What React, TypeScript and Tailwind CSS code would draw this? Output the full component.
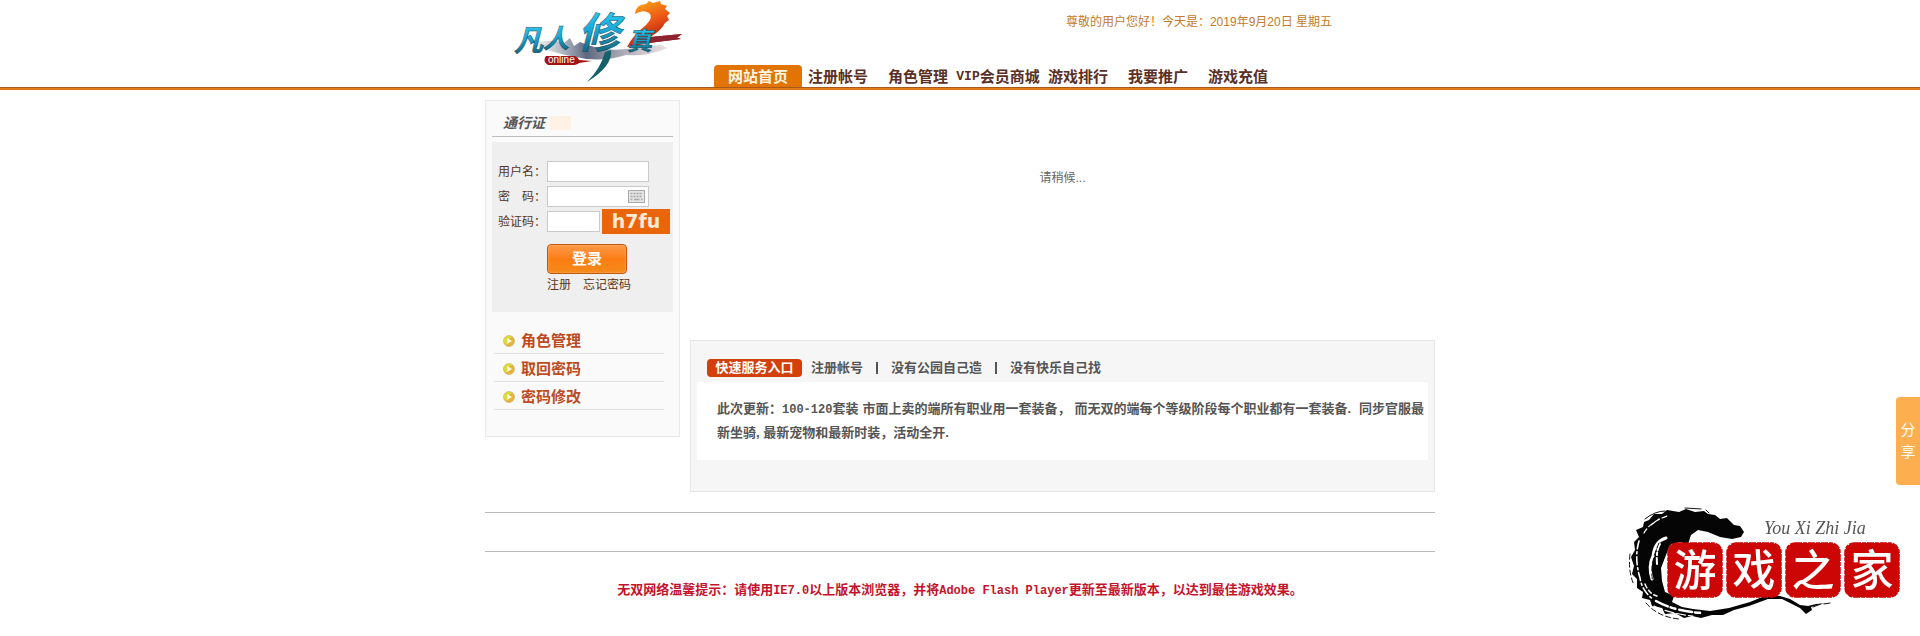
import { useState } from "react";

const navItems = [
  { label: "注册帐号" },
  { label: "角色管理" },
  { label: "会员商城", prefix: "VIP" },
  { label: "游戏排行" },
  { label: "我要推广" },
  { label: "游戏充值" },
];

const sideLinks = ["角色管理", "取回密码", "密码修改"];

const quickLinks = ["注册帐号", "没有公园自己造", "没有快乐自己找"];

const sealChars = ["游", "戏", "之", "家"];

const fieldClass =
  "h-[21px] border border-[#c9c9c9] bg-white px-1 text-xs text-[#333] outline-none";

function Logo() {
  return (
    <svg viewBox="5 0 229 87" className="h-[87px] w-[229px] shrink-0" role="img" aria-label="凡人修真2 online">
      <defs>
        <linearGradient id="ice" x1="0" y1="0" x2="0" y2="1">
          <stop offset="0" stopColor="#35dcfa" />
          <stop offset="0.5" stopColor="#1ba9d8" />
          <stop offset="1" stopColor="#0e4f5c" />
        </linearGradient>
        <linearGradient id="fire" x1="0" y1="0" x2="0.5" y2="1">
          <stop offset="0" stopColor="#f9b413" />
          <stop offset="0.5" stopColor="#ee5a16" />
          <stop offset="1" stopColor="#a51414" />
        </linearGradient>
        <linearGradient id="smoke" x1="0" y1="0" x2="1" y2="0">
          <stop offset="0" stopColor="#b9bec8" stopOpacity="0.2" />
          <stop offset="0.4" stopColor="#5d6780" />
          <stop offset="1" stopColor="#c9b4b8" stopOpacity="0.4" />
        </linearGradient>
      </defs>
      <path d="M52 44 Q70 38 84 43 L90 38 L94 46 L100 42 Q122 52 146 49 L180 45 L188 48 Q166 57 146 55 Q120 63 96 57 Q72 53 52 44Z" fill="url(#smoke)" />
      <path d="M155 14 Q156 4 166 4 L169 1 L173 3 L180 1 L181 4 L187 6 L185 9 L190 13 L187 16 L189 20 L185 23 Q181 31 170 37 L202 34 L197 38 L201 39 L176 42 Q160 45 147 47 Q153 35 166 25 Q174 17 169 13 Q163 9 155 14Z" fill="url(#fire)" />
      <path d="M170 37 L202 34 L196 37 L201 39 L177 42 L160 44Z" fill="#8e2430" />
      {/* long tail under the third character */}
      <path d="M131 50 Q133 66 107 82 Q121 68 125 52Z" fill="#16606a" />
      <g fontFamily="'Noto Sans CJK SC', sans-serif" fontStyle="italic" fontWeight="700" fill="url(#ice)" stroke="#174b5b" strokeWidth="0.5">
        <text x="34" y="51" fontSize="29">凡</text>
        <text x="63" y="48" fontSize="26">人</text>
        <text x="98" y="48" fontSize="42">修</text>
        <text x="147" y="50" fontSize="25">真</text>
      </g>
      <path d="M66 56 L95 56 Q98 57 99 60 L112 61 L99 63 Q97 65 92 65 L68 65 Q62 61 66 56Z" fill="#a01414" />
      <text x="68" y="63" fontFamily="'Liberation Sans', sans-serif" fontSize="10" fill="#fff">online</text>
    </svg>
  );
}

function Bullet() {
  return (
    <svg viewBox="0 0 12 12" className="size-3 shrink-0" aria-hidden="true">
      <circle cx="6" cy="6" r="5.500" fill="#e6b43c" stroke="#cfb070" strokeWidth="0.600" />
      <path d="M1 7 A5 5 0 0 1 9 2 Q4 3 4 10 Q1.500 9 1 7Z" fill="#d9dc3e" />
      <path d="M4.300 3 L9 6 L4.300 9Z" fill="#fffbe0" />
    </svg>
  );
}

function KeyboardIcon() {
  return (
    <svg viewBox="0 0 17 13" className="h-[13px] w-[17px]" aria-hidden="true">
      <rect x="0.500" y="0.500" width="16" height="12" fill="#e4e4e4" stroke="#aaa" />
      <path d="M2.500 3.500H14.500M2.500 6.500H14.500" stroke="#a8a8a8" strokeWidth="1.500" strokeDasharray="2 1" />
      <path d="M2.500 9.500H4.500M6 9.500H11.500M13 9.500H14.500" stroke="#a8a8a8" strokeWidth="1.500" />
    </svg>
  );
}

function LoginForm() {
  const [user, setUser] = useState("");
  const [password, setPassword] = useState("");
  const [code, setCode] = useState("");

  return (
    <form
      className="mt-[5px] h-[170px] bg-[#efefef] pt-[17px] pl-[6px] text-xs text-[#5a3420]"
      onSubmit={(e) => e.preventDefault()}
    >
      <div className="flex h-[25px] items-center">
        <label htmlFor="user" className="w-[49px] whitespace-nowrap">用户名&#65306;</label>
        <input id="user" className={`w-[102px] ${fieldClass}`} value={user} onChange={(e) => setUser(e.target.value)} />
      </div>
      <div className="flex h-[25px] items-center">
        <label htmlFor="password" className="w-[49px] whitespace-nowrap">密&#12288;码&#65306;</label>
        <div className="relative flex">
          <input
            id="password"
            type="password"
            className={`w-[102px] ${fieldClass}`}
            value={password}
            onChange={(e) => setPassword(e.target.value)}
          />
          <span className="absolute top-1 right-1">
            <KeyboardIcon />
          </span>
        </div>
      </div>
      <div className="flex h-[25px] items-center">
        <label htmlFor="code" className="w-[49px] whitespace-nowrap">验证码&#65306;</label>
        <input id="code" className={`w-[53px] ${fieldClass}`} value={code} onChange={(e) => setCode(e.target.value)} />
        <span className="ml-[2px] h-[25px] w-[68px] bg-[#ea640a] text-center font-['DejaVu_Sans',sans-serif] text-[19px] leading-[25px] font-bold text-[#ffe8d4]">
          h7fu
        </span>
      </div>
      <button
        type="submit"
        className="mt-[10px] ml-[49px] block h-[30px] w-20 rounded-[4px] border border-[#c4560c] bg-linear-to-b from-[#ff9a45] via-[#fb7d12] to-[#f58a1c] text-[15px] leading-[28px] font-bold text-white shadow-[inset_0_0_2px_#ffc890]"
      >
        登录
      </button>
      <div className="ml-[49px] flex gap-3 leading-[22px]">
        <a href="#register">注册</a>
        <a href="#forgot">忘记密码</a>
      </div>
    </form>
  );
}

function Sidebar() {
  return (
    <aside className="h-[337px] w-[195px] shrink-0 border border-[#e9e9e9] bg-[#fafafa] px-[6px]">
      <h2 className="flex h-9 items-center border-b border-[#bdbdbd] pt-2 pl-[11px] text-sm font-bold text-[#555] italic">
        通行证
        <span className="ml-1 h-[14px] w-[22px] bg-[#fff1e4]" />
      </h2>
      <LoginForm />
      <ul className="mt-[14px] ml-[2px] w-[170px]">
        {sideLinks.map((label) => (
          <li key={label} className="h-7 border-b border-[#e2e2e2]">
            <a href="#account" className="flex h-full items-center gap-[6px] pt-[3px] pl-[9px] text-[15px] leading-5 font-bold text-[#bd4a20]">
              <Bullet />
              {label}
            </a>
          </li>
        ))}
      </ul>
    </aside>
  );
}

function QuickService() {
  return (
    <section className="mt-auto h-[152px] border border-[#e6e6e6] bg-[#f6f6f6] px-[6px]">
      <div className="flex h-[41px] items-center pt-3 pl-[10px] text-[13px] font-bold text-[#555]">
        <h2 className="mr-[9px] flex h-[18px] w-[95px] items-center justify-center rounded-[4px] bg-[#d4400a] text-white">
          快速服务入口
        </h2>
        {quickLinks.map((label, i) => (
          <span key={label} className="flex items-center">
            {i > 0 && <span className="mx-[13px] h-3 w-[2px] bg-[#555]" />}
            <a href="#quick">{label}</a>
          </span>
        ))}
      </div>
      <div className="h-[78px] overflow-hidden bg-white pt-[15px] pl-5 text-[13px] leading-6 font-bold whitespace-nowrap text-[#555]">
        <p>
          此次更新&#65306;<span className="font-['Liberation_Mono',monospace] text-xs">100-120</span>套装
          <span className="ml-1">市面上卖的端所有职业用一套装备&#65292;</span>
          <span className="ml-1">而无双的端每个等级阶段每个职业都有一套装备.</span>
          <span className="ml-2">同步官服最</span>
        </p>
        <p>新坐骑, 最新宠物和最新时装&#65292;活动全开.</p>
      </div>
    </section>
  );
}

function SealLogo() {
  return (
    <svg viewBox="16 24 278 120" className="fixed right-[16px] bottom-[12px] h-[120px] w-[278px]" role="img" aria-label="游戏之家">
      <path
        d="M134 52 L130 46 L124 45 L117 38 L110 39 L105 35 L98 34 L94 31 L85 32 L76 29 L69 32 L57 30 L52 34 L44 34 L39 40 L34 42 L33 47 L26 50 L29 57 L24 62 L25 70 L21 77 L24 86 L22 94 L27 99 L27 108 L33 112 L32 118 L40 120 L42 126 L52 128 L55 134 L65 133 L74 138 L82 136 L91 138 L102 135 L113 135 L124 130 L139 126 L158 119 L172 119 L184 125 L190 128 L196 134 L202 130 L201 127 L211 124 L218 123 L206 124 L198 126 L190 125 L180 119 L170 116 L157 115 L140 122 L119 128 L100 131 L83 129 L72 127 L62 122 L64 116 L55 112 L52 101 L51 88 L56 75 L60 65 L70 62 L78 64 L81 55 L88 50 L98 52 L110 57 L122 59 L131 57Z"
        fill="#050505"
      />
      <g fill="none" stroke="#fff" strokeLinecap="round">
        <path d="M56 58 Q45 61 43 76 Q38 86 42 99" strokeWidth="3" />
        <path d="M50 64 Q46 70 47 84" strokeWidth="2" strokeDasharray="7 2 3 3" />
        <path d="M29 61 Q24 78 30 98 Q32 111 43 119" strokeWidth="1.600" strokeDasharray="8 3 2 3" />
        <path d="M34 53 Q40 42 57 36 M41 45 L49 39" strokeWidth="1.200" strokeDasharray="5 3" />
        <path d="M46 121 Q66 132 94 133" strokeWidth="2.500" strokeDasharray="13 3 5 4" />
        <path d="M44 126 Q61 134 83 136" strokeWidth="1.200" strokeDasharray="9 3" />
        <path d="M35 104 Q39 114 47 116" strokeWidth="1.500" strokeDasharray="4 3" />
      </g>
      <g fill="none" stroke="#111" strokeWidth="1" strokeLinecap="round">
        <path d="M35 39 Q45 31 55 31 M75 28 L91 29 M96 30 L99 33" />
        <path d="M20 74 Q18 92 24 105 M36 123 Q48 137 69 139 M49 63 Q39 85 43 103" strokeDasharray="5 3" />
        <path d="M203 127 L211 124 M214 124 L220 123" />
      </g>
      {sealChars.map((ch, i) => (
        <g key={ch}>
          <rect
            x={58 + i * 59}
            y="63"
            width="54"
            height="54"
            rx="9"
            fill="#cc0505"
            stroke="#cc0505"
            strokeWidth="1.500"
            strokeDasharray="7 1 4 1"
          />
          <text
            x={85 + i * 59}
            y="106"
            textAnchor="middle"
            fontFamily="'Noto Sans CJK SC', sans-serif"
            fontSize="43"
            fontWeight="500"
            fill="#fff"
          >
            {ch}
          </text>
        </g>
      ))}
      <text
        x="154"
        y="54"
        fontFamily="'Liberation Serif', serif"
        fontStyle="italic"
        fontSize="18"
        fill="#555"
      >
        You Xi Zhi Jia
      </text>
    </svg>
  );
}

export default function App() {
  return (
    <div className="font-['Liberation_Sans','Noto_Sans_CJK_SC',sans-serif]">
      <header className="border-b-2 border-[#e27a14]">
        <div className="border-b border-[#a85a1c]">
          <div className="mx-auto flex h-[87px] max-w-[950px]">
            <Logo />
            <div className="flex grow flex-col justify-between">
              <p className="mt-3 mr-[103px] text-right text-xs leading-5 text-[#c47a28]">
                尊敬的用户您好&#65281;今天是&#65306;2019年9月20日 星期五
              </p>
              <nav className="flex h-[22px] text-[15px] leading-6 font-bold text-[#5a3026]">
                <a href="#home" className="-mr-1 w-[88px] rounded-t-[4px] bg-[#e27404] text-center text-[#fff4e0]">
                  网站首页
                </a>
                {navItems.map((item) => (
                  <a key={item.label} href="#nav" className="flex w-20 justify-center whitespace-nowrap">
                    {item.prefix && (
                      <span className="font-['Liberation_Mono',monospace] text-[13px]">{item.prefix}</span>
                    )}
                    {item.label}
                  </a>
                ))}
              </nav>
            </div>
          </div>
        </div>
      </header>

      <main className="mx-auto max-w-[950px]">
        <div className="flex gap-[10px] pt-[10px]">
          <Sidebar />
          <div className="flex h-[392px] min-w-0 grow flex-col">
            <p className="mt-[68px] text-center text-xs leading-5 text-[#666]">请稍候...</p>
            <QuickService />
          </div>
        </div>
        <hr className="mt-5 border-[#bbb]" />
        <hr className="mt-[38px] border-[#bbb]" />
      </main>

      <footer className="mt-7 text-center text-[13px] leading-5 font-bold text-[#c4142c]">
        无双网络温馨提示&#65306;请使用
        <span className="font-['Liberation_Mono',monospace] text-xs">IE7.0</span>
        以上版本浏览器&#65292;并将
        <span className="font-['Liberation_Mono',monospace] text-xs">Adobe Flash Player</span>
        更新至最新版本&#65292;以达到最佳游戏效果。
      </footer>

      <button
        type="button"
        className="fixed top-[397px] right-0 flex h-[88px] w-6 flex-col items-center justify-center rounded-l-[4px] bg-[#fdae4e] text-[15px] leading-[22px] text-white"
      >
        <span>分</span>
        <span>享</span>
      </button>
      <SealLogo />
    </div>
  );
}
